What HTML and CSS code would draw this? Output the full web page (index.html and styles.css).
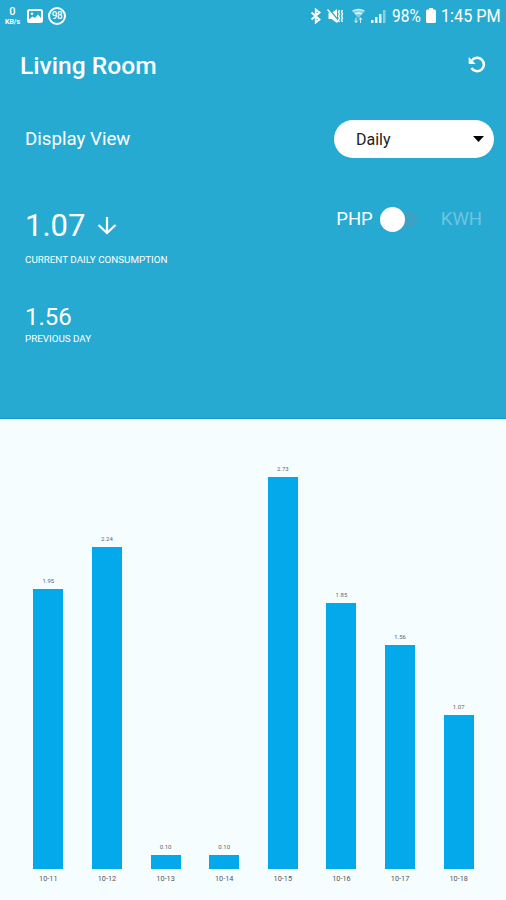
FILE: index.html
```html
<!DOCTYPE html>
<html lang="en">
<head>
    <meta charset="UTF-8">
    <meta name="viewport" content="width=device-width, initial-scale=1.0">
    <title>Living Room</title>
    <link rel="stylesheet" href="styles.css">
</head>
<body>
    <header class="top">
        <div class="status-bar">
            <div class="status-left">
                <div class="speed"><span class="speed-value">0</span><span class="speed-unit">KB/s</span></div>
                <svg class="picture" width="16" height="14" viewBox="0 0 16 14">
                    <rect x="1" y="1" width="14" height="12" rx="1.5" fill="none" stroke="#fff" stroke-width="2"/>
                    <circle cx="5" cy="4.7" r="1.2" fill="#fff"/>
                    <path d="M2 10.500l3.500-3 2.500 1.500L11 5.500l3 3.500v3H2z" fill="#fff"/>
                </svg>
                <div class="badge">98</div>
            </div>
            <div class="status-right">
                <svg width="12" height="16" viewBox="0 0 12 16">
                    <path d="M1.500 4.500l8 7L5.800 14.500v-13L9.500 4.500l-8 7" fill="none" stroke="#fff" stroke-width="1.900"/>
                </svg>
                <svg class="mute" width="17" height="16" viewBox="0 0 17 16">
                    <path d="M1.500 5h3l5.500-4v14l-5.500-4h-3z" fill="#fff"/>
                    <path d="M1.500 0.500l10 12" stroke="#27aad1" stroke-width="1.500"/>
                    <path d="M0.500 1.500l10.500 12.500" stroke="#fff" stroke-width="1.500"/>
                    <path d="M12.500 2l-1 2 1 2-1 2 1 2-1 2 1 2M15.500 2l-1 2 1 2-1 2 1 2-1 2 1 2" fill="none" stroke="#fff" stroke-width="1.400"/>
                </svg>
                <svg class="wifi" width="13" height="16" viewBox="0 0 13 16">
                    <path d="M0.500 3.500Q6.500 0 12.500 3.500L6.500 10z" fill="#fff" opacity="0.450"/>
                    <path d="M0.500 3Q6.500 0 12.500 3M3 6Q6.500 4 10 6" fill="none" stroke="#fff" stroke-width="1.300" opacity="0.800"/>
                    <path d="M4 9.500v5M2.300 12.500L4 14.500l1.700-2M8.500 15v-5M7 11.700l1.500-2 1.500 2" fill="none" stroke="#fff" opacity="0.800"/>
                </svg>
                <svg class="signal" width="15" height="14" viewBox="0 0 15 14">
                    <path d="M0 11h2.500v3H0zM4 8h2.500v6H4zM8 5h2.500v9H8z" fill="#fff" opacity="0.900"/>
                    <path d="M12 1h2.500v13H12z" fill="#fff" opacity="0.450"/>
                </svg>
                <span class="percent">98%</span>
                <svg class="battery" width="10" height="15" viewBox="0 0 10 15">
                    <path d="M3 0h4v1.500h1.500Q10 1.500 10 3v10.500Q10 15 8.500 15h-7Q0 15 0 13.500V3q0-1.500 1.500-1.500H3z" fill="#fff"/>
                </svg>
                <span class="clock">1:45 PM</span>
            </div>
        </div>

        <div class="title-bar">
            <h1>Living Room</h1>
            <svg width="20" height="20" viewBox="0 0 20 20">
                <path d="M5 5.300A6.700 6.700 0 1 1 4.500 13" fill="none" stroke="#fff" stroke-width="2.500"/>
                <path d="M1.700 2v7h7z" fill="#fff"/>
            </svg>
        </div>

        <div class="display-row">
            <span class="display-label">Display View</span>
            <div class="select">
                <span>Daily</span>
                <svg width="11" height="6" viewBox="0 0 11 6"><path d="M0 0h11L5.500 6z" fill="#000"/></svg>
            </div>
        </div>

        <div class="usage-row">
            <div class="usage">
                <div class="current">
                    <span>1.07</span>
                    <svg width="20" height="19" viewBox="0 0 20 19">
                        <path d="M10 1v16M1.500 9l8.500 8 8.500-8" fill="none" stroke="#fff" stroke-width="2.200"/>
                    </svg>
                </div>
                <p class="caption current-caption">CURRENT DAILY CONSUMPTION</p>
                <div class="previous">1.56</div>
                <p class="caption previous-caption">PREVIOUS DAY</p>
            </div>
            <div class="units">
                <span class="unit">PHP</span>
                <div class="toggle"><div class="knob"></div></div>
                <span class="unit unit-off">KWH</span>
            </div>
        </div>
    </header>

    <main class="chart">
        <div class="column"><span class="value">1.95</span><div class="bar" style="height: 280px"></div><span class="day">10-11</span></div>
        <div class="column"><span class="value">2.24</span><div class="bar" style="height: 322px"></div><span class="day">10-12</span></div>
        <div class="column"><span class="value">0.10</span><div class="bar" style="height: 14px"></div><span class="day">10-13</span></div>
        <div class="column"><span class="value">0.10</span><div class="bar" style="height: 14px"></div><span class="day">10-14</span></div>
        <div class="column"><span class="value">2.73</span><div class="bar" style="height: 392px"></div><span class="day">10-15</span></div>
        <div class="column"><span class="value">1.85</span><div class="bar" style="height: 266px"></div><span class="day">10-16</span></div>
        <div class="column"><span class="value">1.56</span><div class="bar" style="height: 224px"></div><span class="day">10-17</span></div>
        <div class="column"><span class="value">1.07</span><div class="bar" style="height: 154px"></div><span class="day">10-18</span></div>
    </main>
</body>
</html>
```
FILE: styles.css
```css
* {
    box-sizing: border-box;
}

body {
    font-family: Roboto, "Liberation Sans", sans-serif;
    background-color: #f5fdff;
    color: white;
    margin: 0;
    height: 900px;
    display: flex;
    flex-direction: column;
    overflow: hidden;
}

svg {
    display: block;
    flex: none;
}

.top {
    background-color: #27aad1;
    border-bottom: 1px solid #1299c6;
    height: 419px;
}

.status-bar {
    display: flex;
    justify-content: space-between;
    height: 31px;
    padding: 0 6px 0 4px;
}

.status-left,
.status-right {
    display: flex;
    align-items: center;
}

.speed {
    display: flex;
    flex-direction: column;
    align-items: center;
    width: 17px;
    margin-right: 6px;
}

.speed-value {
    font-size: 11px;
    font-weight: 500;
    line-height: 13px;
}

.speed-unit {
    font-size: 7px;
    font-weight: 700;
    line-height: 8px;
}

.picture {
    margin-right: 5px;
}

.badge {
    width: 18px;
    height: 18px;
    border: 2px solid white;
    border-radius: 50%;
    font-size: 10px;
    font-weight: 500;
    line-height: 14px;
    text-align: center;
    letter-spacing: -0.5px;
}

.mute {
    margin-left: 5px;
}

.wifi {
    margin-left: 8px;
}

.signal {
    margin-left: 6px;
}

.percent {
    font-size: 18px;
    width: 30px;
    margin-left: 6px;
    transform: scaleX(0.86);
    transform-origin: left;
}

.battery {
    margin-left: 4px;
}

.clock {
    font-size: 18px;
    width: 59px;
    margin-left: 5px;
    white-space: nowrap;
    transform: scaleX(0.9);
    transform-origin: left;
}

.title-bar {
    display: flex;
    justify-content: space-between;
    align-items: center;
    height: 68px;
    padding: 0 19px 0 20px;
}

h1 {
    font-size: 24.6px;
    font-weight: 500;
    margin: 0;
}

.display-row {
    display: flex;
    justify-content: space-between;
    align-items: center;
    padding: 21px 12px 0 25px;
}

.display-label {
    font-size: 18.7px;
}

.select {
    display: flex;
    justify-content: space-between;
    align-items: center;
    width: 160px;
    height: 38px;
    padding: 0 10px 0 22px;
    border-radius: 19px;
    background-color: white;
    color: #222;
    font-size: 16px;
}

.usage-row {
    display: flex;
    justify-content: space-between;
    padding: 47px 24px 0 25px;
}

.current {
    display: flex;
    align-items: center;
    gap: 12px;
    height: 40px;
    font-size: 31px;
}

.caption {
    font-size: 9.8px;
    line-height: 12px;
    margin: 0;
    white-space: nowrap;
}

.current-caption {
    margin-top: 9px;
}

.previous {
    font-size: 24px;
    line-height: 28px;
    margin-top: 37px;
}

.previous-caption {
    margin-top: 2px;
}

.units {
    display: flex;
    align-items: center;
    height: 28px;
}

.unit {
    font-size: 18.5px;
}

.unit-off {
    color: #6cc4e2;
}

.toggle {
    display: flex;
    align-items: center;
    width: 38px;
    height: 15px;
    margin: 0 23px 0 7px;
    border-radius: 8px;
    background-color: #3ba2c5;
}

.knob {
    flex: none;
    width: 25px;
    height: 25px;
    border-radius: 50%;
    background-color: white;
}

.chart {
    flex: 1;
    display: flex;
    align-items: flex-end;
    padding: 0 18px 17px 19px;
}

.column {
    flex: 1;
    display: flex;
    flex-direction: column;
    align-items: center;
    color: #666;
    font-size: 6px;
}

.value {
    line-height: 8px;
    margin-bottom: 4px;
}

.bar {
    width: 30px;
    background-color: #03a9eb;
}

.day {
    font-size: 7.3px;
    line-height: 8px;
    margin-top: 6px;
    color: #555;
}
```
